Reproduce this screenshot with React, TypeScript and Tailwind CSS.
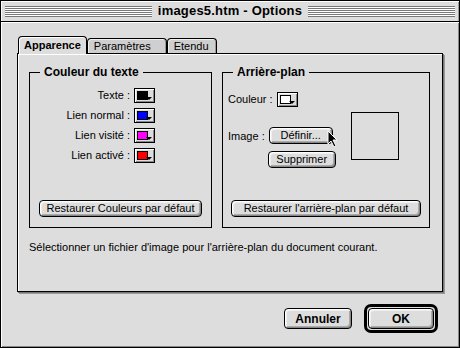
import React from "react";

const font = { fontFamily: '"Liberation Sans", Arial, sans-serif' };

function Swatch({ color }: { color: string }) {
  return (
    <div className="relative w-[21px] h-[15px] border border-black bg-[#dddddd] shadow-[inset_1px_1px_0_#fff,inset_-1px_-1px_0_#888]">
      <div className="absolute left-[2px] top-[2px] w-[11px] h-[9px] border border-black" style={{ background: color }} />
      <div className="absolute right-[2px] bottom-[2px] w-0 h-0 border-l-[3px] border-r-[3px] border-t-[3px] border-l-transparent border-r-transparent border-t-black" />
    </div>
  );
}

function Btn({ children, className = "" }: { children: React.ReactNode; className?: string }) {
  return (
    <div
      className={
        "flex items-center justify-center border border-black rounded-[4px] bg-[#dddddd] shadow-[inset_1px_1px_0_#fff,inset_-1px_-1px_0_#888,inset_2px_2px_0_#eee,inset_-2px_-2px_0_#aaa] text-[11px] text-black " +
        className
      }
    >
      {children}
    </div>
  );
}

function Group({ title, className = "", children }: { title: string; className?: string; children: React.ReactNode }) {
  return (
    <div className={"relative border border-black " + className}>
      <div className="absolute -top-[8px] left-[10px] bg-[#dddddd] px-[4px] text-[12px] font-bold leading-[14px]">{title}</div>
      {children}
    </div>
  );
}

export default function App() {
  return (
    <div style={font} className="w-[460px] h-[348px] bg-[#dddddd] border border-black flex flex-col text-black overflow-hidden">
      {/* title bar */}
      <div className="h-[21px] shrink-0 flex items-center px-[4px] gap-[6px] border-b border-black bg-[#dddddd] shadow-[inset_1px_1px_0_#fff,inset_-1px_0_0_#999]">
        <div className="flex-1 h-[11px] bg-[repeating-linear-gradient(to_bottom,#777_0px,#777_1px,#fff_1px,#fff_2px)]" />
        <div className="text-[13px] font-bold leading-[16px] tracking-[0.2px]">images5.htm - Options</div>
        <div className="flex-1 h-[11px] bg-[repeating-linear-gradient(to_bottom,#777_0px,#777_1px,#fff_1px,#fff_2px)]" />
      </div>
      {/* body */}
      <div className="flex-1 flex flex-col px-[16px] pt-[14px] shadow-[inset_1px_1px_0_#fff,inset_-1px_-1px_0_#888]">
        {/* tabs */}
        <div className="flex items-end h-[17px] pl-[1px]">
          <div className="h-[18px] -mb-px z-10 border border-b-0 border-black rounded-t-[4px] bg-[#dddddd] px-[5px] flex items-center text-[11px] font-bold shadow-[inset_1px_1px_0_#fff]">
            Apparence
          </div>
          <div className="h-[15px] border border-b-0 border-black rounded-t-[4px] bg-[#cfcfcf] pl-[6px] pr-[15px] flex items-center text-[11px] shadow-[inset_1px_1px_0_#eee,inset_-1px_0_0_#999]">
            Paramètres
          </div>
          <div className="h-[15px] border border-b-0 border-black rounded-t-[4px] bg-[#cfcfcf] pl-[6px] pr-[7px] flex items-center text-[11px] shadow-[inset_1px_1px_0_#eee,inset_-1px_0_0_#999]">
            Etendu
          </div>
        </div>
        {/* panel */}
        <div className="w-[426px] h-[239px] border border-black bg-[#dddddd] shadow-[1px_1px_0_#777,2px_2px_0_#999,inset_1px_1px_0_#fff] flex flex-col px-[11px] pt-[18px]">
          <div className="flex gap-[10px]">
            <Group title="Couleur du texte" className="w-[183px] h-[156px] flex flex-col">
              <div className="flex flex-col items-end pr-[56px] pt-[15px] gap-[5px] text-[11px]">
                {[
                  ["Texte :", "#000000"],
                  ["Lien normal :", "#0000ff"],
                  ["Lien visité :", "#ff00ff"],
                  ["Lien activé :", "#ff0000"],
                ].map(([l, c]) => (
                  <div key={l} className="flex items-center gap-[4px] h-[15px] leading-[15px]">
                    <span>{l}</span>
                    <Swatch color={c} />
                  </div>
                ))}
              </div>
              <div className="mt-auto mb-[10px] flex justify-center">
                <Btn className="w-[163px] h-[17px]">Restaurer Couleurs par défaut</Btn>
              </div>
            </Group>
            <Group title="Arrière-plan" className="w-[208px] h-[156px] flex flex-col">
              <div className="flex pl-[5px] pt-[18px] text-[11px]">
                <div className="flex flex-col">
                  <div className="flex items-center gap-[4px]">
                    <span>Couleur :</span>
                    <Swatch color="#ffffff" />
                  </div>
                  <div className="flex items-start gap-[4px] mt-[19px]">
                    <span className="mt-[1px]">Image :</span>
                    <div className="flex flex-col gap-[7px]">
                      <div className="relative">
                        <Btn className="w-[64px] h-[17px]">Définir...</Btn>
                        <svg className="absolute left-[58px] top-[3px]" width="12" height="18" viewBox="0 0 12 18">
                          <path d="M1 1 L1 14 L4 11 L7 17 L9 16 L6 10 L10 10 Z" fill="#000" stroke="#fff" strokeWidth="1" />
                        </svg>
                      </div>
                      <Btn className="w-[68px] h-[17px] -ml-[1px]">Supprimer</Btn>
                    </div>
                  </div>
                </div>
                <div className="ml-auto mr-[30px] mt-[21px] w-[48px] h-[48px] border border-black" />
              </div>
              <div className="mt-auto mb-[10px] flex justify-center">
                <Btn className="w-[190px] h-[17px]">Restaurer l'arrière-plan par défaut</Btn>
              </div>
            </Group>
          </div>
          <div className="mt-[13px] text-[11px] leading-[12px]">
            Sélectionner un fichier d'image pour l'arrière-plan du document courant.
          </div>
        </div>
        {/* buttons */}
        <div className="flex justify-end items-center gap-[12px] mt-[12px] pr-[5px]">
          <Btn className="w-[68px] h-[21px] text-[12px] font-bold">Annuler</Btn>
          <div className="border-[3px] border-black rounded-[7px] p-[1px]">
            <Btn className="w-[66px] h-[21px] text-[12px] font-bold">OK</Btn>
          </div>
        </div>
      </div>
    </div>
  );
}
